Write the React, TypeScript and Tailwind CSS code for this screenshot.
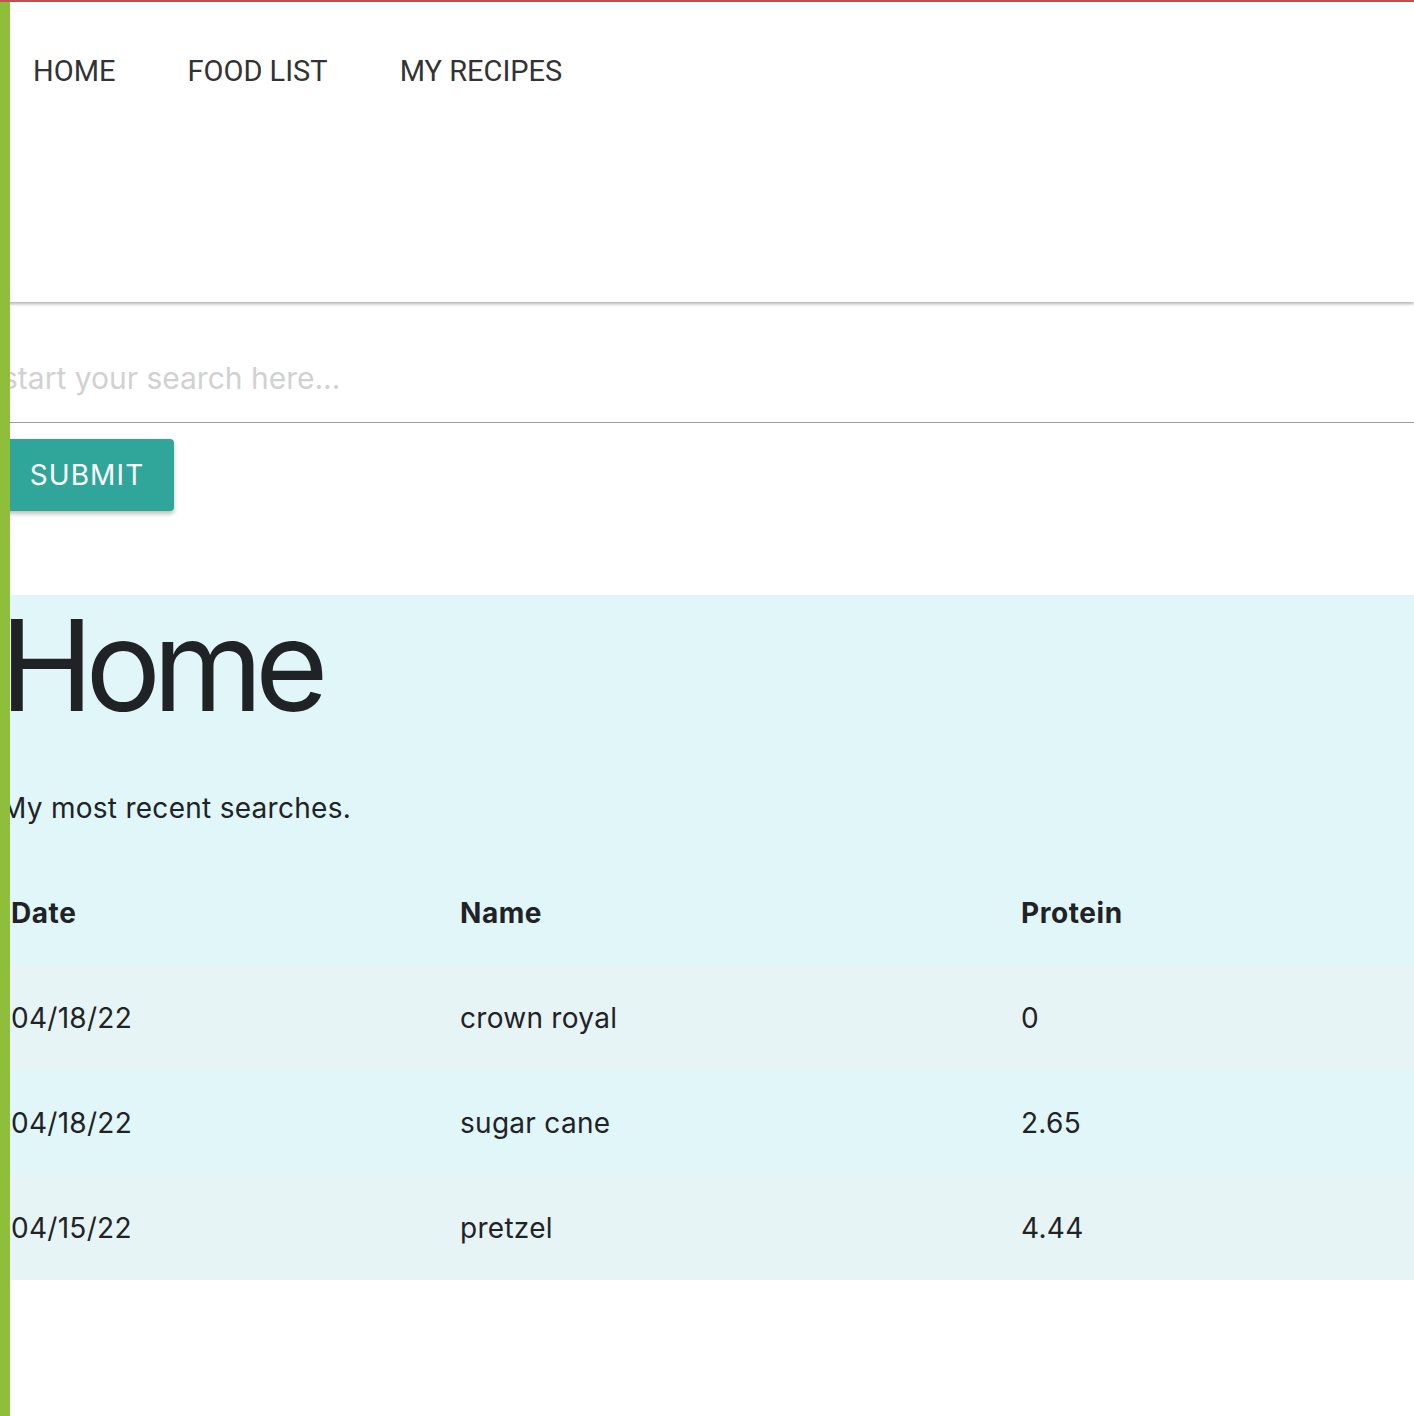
import { useState } from 'react'

const searches = [
  { date: '04/18/22', name: 'crown royal', protein: '0' },
  { date: '04/18/22', name: 'sugar cane', protein: '2.65' },
  { date: '04/15/22', name: 'pretzel', protein: '4.44' },
]

export default function App() {
  const [query, setQuery] = useState('')

  return (
    <div className="relative min-h-[1416px] w-full overflow-hidden border-t-2 border-[#c4514f] bg-white font-['Inter',sans-serif] text-[#1f2325]">
      {/* green edge */}
      <div className="absolute left-0 top-[-2px] bottom-0 z-20 w-[10px] bg-[#8fbe3b]" />

      {/* Nav */}
      <nav className="relative z-10 h-[300px] bg-white shadow-[0_2px_3px_rgba(0,0,0,0.3)]">
        <ul className="flex gap-[72px] pl-[33px] pt-[52px] font-['Roboto',sans-serif] text-[29px] leading-[34px] text-[#333]">
          <li>HOME</li>
          <li>FOOD LIST</li>
          <li>MY RECIPES</li>
        </ul>
      </nav>

      {/* Search */}
      <form className="pt-[36px]" onSubmit={(e) => e.preventDefault()}>
        <input
          value={query}
          onChange={(e) => setQuery(e.target.value)}
          placeholder="start your search here..."
          className="block h-[85px] w-full border-b border-[#9e9e9e] bg-transparent pb-[4px] pl-[2px] text-[30px] outline-none placeholder:text-[#d1d1d1]"
        />
        <button
          type="submit"
          className="mt-[16px] h-[72px] w-[174px] rounded-[4px] bg-[#2fa699] text-[28px] tracking-[0.04em] text-white shadow-[0_3px_4px_rgba(0,0,0,0.25)]"
        >
          SUBMIT
        </button>
      </form>

      {/* Home */}
      <section className="mt-[84px] bg-[#e0f6f9] pt-[7px]">
        <h1 className="text-[126px] leading-none tracking-[-0.065em]">Home</h1>
        <p className="mt-[63px] pl-[1px] text-[28px] leading-[34px] tracking-[0.01em]">My most recent searches.</p>

        <div className="mt-[35px] text-[28px] tracking-[0.01em]">
          <div className="grid h-[105px] grid-cols-[449px_561px_1fr] items-center font-bold tracking-[0.02em]">
            <div className="pl-[11px]">Date</div>
            <div className="pl-[11px]">Name</div>
            <div className="pl-[11px]">Protein</div>
          </div>
          {searches.map((s, i) => (
            <div
              key={i}
              className={`grid h-[105px] grid-cols-[449px_561px_1fr] items-center ${i % 2 === 0 ? 'bg-[#e7f4f6]' : 'bg-[#e0f6f9]'}`}
            >
              <div className="pl-[11px]">{s.date}</div>
              <div className="pl-[11px]">{s.name}</div>
              <div className="pl-[11px]">{s.protein}</div>
            </div>
          ))}
        </div>
      </section>
    </div>
  )
}
